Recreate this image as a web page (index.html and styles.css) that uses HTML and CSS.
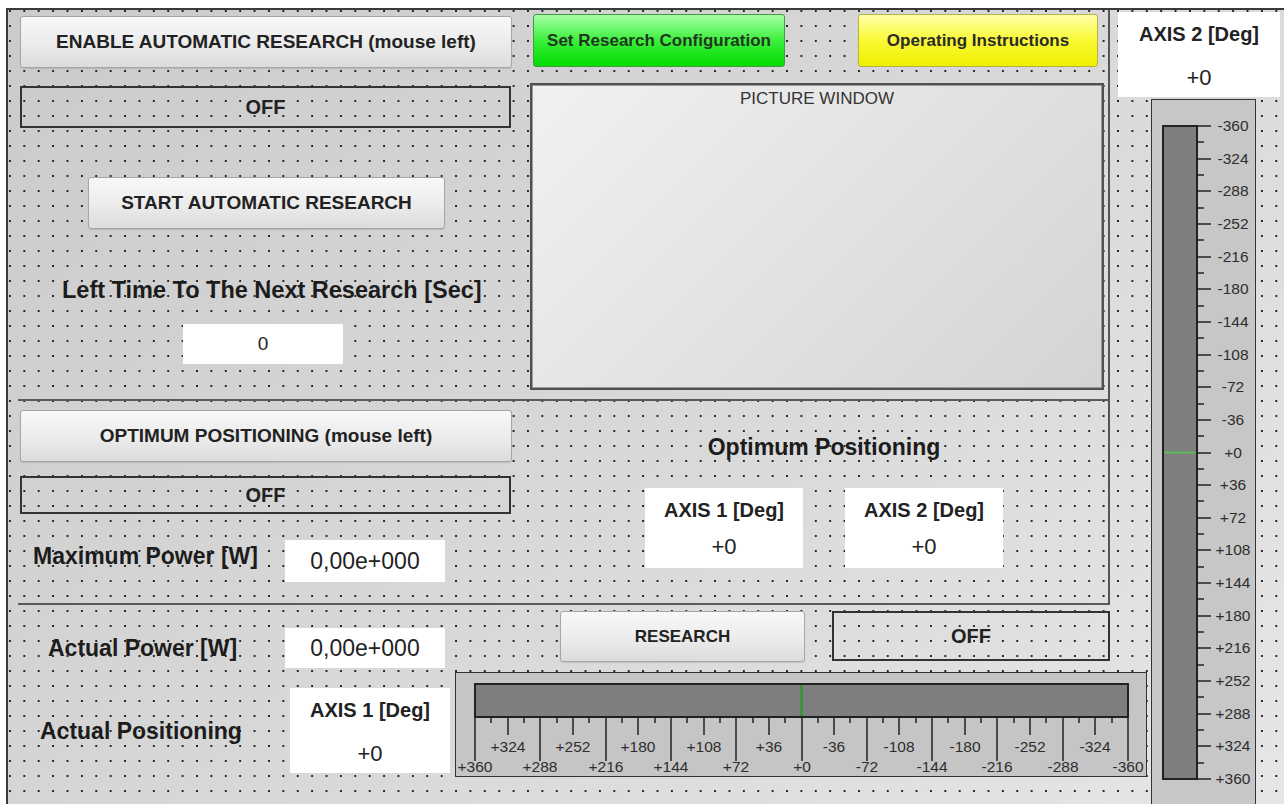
FILE: index.html
```html
<!DOCTYPE html>
<html lang="en">
<head>
    <meta charset="UTF-8">
    <meta name="viewport" content="width=device-width, initial-scale=1.0">
    <title>Automatic Research</title>
    <link rel="stylesheet" href="styles.css">
</head>
<body>
    <div class="panel">
        <div class="main">
            <section class="top">
                <div class="top-left">
                    <button class="btn btn-wide">ENABLE AUTOMATIC RESEARCH (mouse left)</button>
                    <div class="led-off led-auto">OFF</div>
                    <button class="btn btn-start">START AUTOMATIC RESEARCH</button>
                    <div class="label label-time">Left Time To The Next Research [Sec]</div>
                    <div class="numbox numbox-time">0</div>
                </div>
                <div class="top-right">
                    <div class="menu-row">
                        <button class="btn-color btn-green">Set Research Configuration</button>
                        <button class="btn-color btn-yellow">Operating Instructions</button>
                    </div>
                    <div class="picture">PICTURE WINDOW</div>
                </div>
            </section>
            <div class="divider"></div>
            <section class="mid">
                <div class="mid-left">
                    <button class="btn btn-wide btn-opt">OPTIMUM POSITIONING (mouse left)</button>
                    <div class="led-off led-opt">OFF</div>
                    <div class="power-row">
                        <span class="label label-max">Maximum Power [W]</span>
                        <div class="numbox numbox-power">0,00e+000</div>
                    </div>
                </div>
                <div class="mid-right">
                    <div class="label label-opt">Optimum Positioning</div>
                    <div class="axis-pair">
                        <div class="axis-box">
                            <div class="axis-title">AXIS 1 [Deg]</div>
                            <div class="axis-value">+0</div>
                        </div>
                        <div class="axis-box">
                            <div class="axis-title">AXIS 2 [Deg]</div>
                            <div class="axis-value">+0</div>
                        </div>
                    </div>
                </div>
            </section>
            <div class="divider"></div>
        </div>

        <div class="axis-box axis-top">
            <div class="axis-title">AXIS 2 [Deg]</div>
            <div class="axis-value">+0</div>
        </div>

        <div class="vgauge">
            <svg class="scale" id="vscale" width="105" height="720"></svg>
        </div>

        <section class="bottom">
            <div class="bottom-left">
                <div class="actual-row">
                    <span class="label label-actual">Actual Power [W]</span>
                    <div class="numbox numbox-power numbox-actual">0,00e+000</div>
                </div>
                <div class="actual-row pos-row">
                    <span class="label label-pos">Actual Positioning</span>
                    <div class="axis-box axis-actual">
                        <div class="axis-title">AXIS 1 [Deg]</div>
                        <div class="axis-value">+0</div>
                    </div>
                </div>
            </div>
            <div class="bottom-right">
                <div class="research-row">
                    <button class="btn btn-research">RESEARCH</button>
                    <div class="led-off led-research">OFF</div>
                </div>
                <div class="hgauge">
                    <svg class="scale" id="hscale" width="692" height="105"></svg>
                </div>
            </div>
        </section>
    </div>

    <script>
        // Skale dla osi 1 (pozioma) i osi 2 (pionowa)
        const NS = "http://www.w3.org/2000/svg";

        function draw(svg, tag, attrs, text) {
            const el = document.createElementNS(NS, tag);
            for (const k in attrs) el.setAttribute(k, attrs[k]);
            if (text !== undefined) el.textContent = text;
            svg.appendChild(el);
            return el;
        }

        function fmt(v) {
            return v >= 0 ? "+" + v : String(v);
        }

        const step = 653 / 40;

        // oś 1
        const h = document.getElementById("hscale");
        draw(h, "rect", { x: 0.5, y: 0.5, width: 691, height: 104, fill: "#c5c5c5", stroke: "#333" });
        draw(h, "rect", { x: 20, y: 12, width: 653, height: 33, fill: "#7e7e7e", stroke: "#222", "stroke-width": 2 });
        for (let i = 0; i <= 40; i++) {
            const x = Math.round(20 + i * step);
            const len = i % 4 === 0 ? 44 : (i % 4 === 2 ? 18 : 6);
            draw(h, "line", { x1: x, y1: 45, x2: x, y2: 45 + len, stroke: "#222", "stroke-width": 1.5 });
            if (i % 2 === 0) {
                draw(h, "text", { x: x, y: i % 4 === 0 ? 100 : 80, "text-anchor": "middle" }, fmt(360 - 18 * i));
            }
        }
        draw(h, "line", { x1: 346.5, y1: 13, x2: 346.5, y2: 44, stroke: "#1f9d1f", "stroke-width": 2 });

        // oś 2
        const v = document.getElementById("vscale");
        draw(v, "rect", { x: 0.5, y: 0.5, width: 104, height: 760, fill: "#c7c7c7", stroke: "#333" });
        draw(v, "rect", { x: 12, y: 27, width: 34, height: 653, fill: "#7e7e7e", stroke: "#222", "stroke-width": 2 });
        for (let j = 0; j <= 40; j++) {
            const y = Math.round(27 + j * step);
            draw(v, "line", { x1: 46, y1: y, x2: j % 2 === 0 ? 60 : 53, y2: y, stroke: "#222", "stroke-width": 1.5 });
            if (j % 2 === 0) {
                draw(v, "text", { x: 82, y: y + 5, "text-anchor": "middle" }, fmt(-360 + 18 * j));
            }
        }
        draw(v, "line", { x1: 13, y1: 353.5, x2: 45, y2: 353.5, stroke: "#5cb85c", "stroke-width": 2 });
    </script>
</body>
</html>
```

FILE: styles.css
```css
* {
    box-sizing: border-box;
}
body {
    margin: 0;
    padding: 8px 0 0 6px;
    height: 804px;
    overflow: hidden;
    background: #fff;
    font-family: "Liberation Sans", Arial, sans-serif;
    color: #222;
}
button {
    font-family: "Liberation Sans", Arial, sans-serif;
    padding: 0;
    cursor: pointer;
}
.panel {
    display: grid;
    grid-template-columns: 1102px 41px 1fr;
    grid-template-rows: 89px 506px 1fr;
    height: 796px;
    overflow: hidden;
    border-left: 2px solid #3a3a3a;
    border-top: 2px solid #3a3a3a;
    background-color: #d6d6d6;
    background-image:
        radial-gradient(circle at 2px 1px, #262626 0.8px, transparent 1.4px),
        linear-gradient(135deg, #cbcbcb 0%, #d8d8d8 50%, #e6e6e6 100%);
    background-size: 14.4px 15px, 100% 100%;
}

/* lewa kolumna z górną i środkową częścią */
.main {
    grid-column: 1;
    grid-row: 1 / 3;
    display: flex;
    flex-direction: column;
    border-right: 2px solid #555;
}
.top, .mid {
    display: grid;
    grid-template-columns: 492px 574px;
    column-gap: 18px;
    padding-left: 12px;
}
.top {
    height: 389px;
}
.mid {
    height: 202px;
}
.divider {
    flex: none;
    height: 2px;
    margin-left: 10px;
    background: #5a5a5a;
}

.top-left, .mid-left {
    display: flex;
    flex-direction: column;
    align-items: flex-start;
}
.btn {
    font-size: 19px;
    font-weight: bold;
    color: #222;
    background: linear-gradient(#f8f8f8, #ebebeb 55%, #dcdcdc);
    border: 1px solid #a6a6a6;
    border-radius: 3px;
    box-shadow: 0 1px 1px rgba(0, 0, 0, 0.12);
}
.btn-wide {
    width: 492px;
    height: 52px;
    margin-top: 6px;
}
.btn-start {
    width: 357px;
    height: 52px;
    margin-top: 49px;
    margin-left: 68px;
}
.led-off {
    display: flex;
    align-items: center;
    justify-content: center;
    border: 2px solid #333;
    font-size: 20px;
    font-weight: bold;
    color: #222;
}
.led-auto {
    width: 491px;
    height: 42px;
    margin-top: 18px;
}
.label {
    font-size: 23px;
    font-weight: bold;
    line-height: 30px;
    color: #1c1c1c;
    white-space: nowrap;
}
.label-time {
    margin-top: 46px;
    margin-left: 42px;
    font-size: 23.5px;
}
.numbox {
    display: flex;
    align-items: center;
    justify-content: center;
    background: #fff;
    color: #222;
}
.numbox-time {
    width: 160px;
    height: 40px;
    margin-top: 19px;
    margin-left: 163px;
    font-size: 19px;
}

.top-right {
    display: flex;
    flex-direction: column;
}
.menu-row {
    display: flex;
    justify-content: space-between;
    height: 53px;
    margin-top: 4px;
    padding: 0 6px 0 3px;
}
.btn-color {
    height: 53px;
    font-size: 17px;
    font-weight: bold;
    border-radius: 3px;
    color: #2b2b2b;
}
.btn-green {
    width: 252px;
    background: linear-gradient(#a6ffa6, #3cef3c 50%, #00dc00);
    border: 1px solid #3f9c3f;
    color: #21381f;
}
.btn-yellow {
    width: 240px;
    background: linear-gradient(#ffffaa, #f9f934 50%, #efef00);
    border: 1px solid #b4b43c;
}
.picture {
    height: 307px;
    margin-top: 16px;
    padding-top: 3px;
    border: 2px solid #505050;
    box-shadow: inset 0 0 0 1px #9a9a9a;
    background: linear-gradient(135deg, #f1f1f1, #d4d4d4);
    text-align: center;
    font-size: 17px;
    line-height: 22px;
    color: #333;
}

.btn-opt {
    margin-top: 9px;
}
.led-opt {
    width: 491px;
    height: 38px;
    margin-top: 14px;
}
.power-row {
    display: flex;
    align-items: center;
    margin-top: 26px;
}
.label-max {
    width: 252px;
    margin-left: 13px;
    margin-bottom: 10px;
}
.numbox-power {
    width: 160px;
    height: 42px;
    font-size: 23px;
}
.mid-right {
    display: flex;
    flex-direction: column;
    align-items: center;
    padding-left: 14px;
}
.label-opt {
    margin-top: 31px;
}
.axis-pair {
    display: flex;
    gap: 42px;
    margin-top: 26px;
}
.axis-box {
    display: flex;
    flex-direction: column;
    justify-content: space-between;
    align-items: center;
    padding: 10px 0 9px;
    background: #fff;
    color: #222;
}
.axis-pair .axis-box {
    width: 158px;
    height: 80px;
}
.axis-title {
    font-size: 20px;
    font-weight: bold;
    line-height: 24px;
}
.axis-value {
    font-size: 22px;
    line-height: 24px;
}

/* prawa kolumna */
.axis-top {
    grid-column: 2 / 4;
    grid-row: 1;
    width: 162px;
    height: 85px;
    margin: 2px 0 0 8px;
    padding-bottom: 7px;
}
.vgauge {
    grid-column: 3;
    grid-row: 2 / 4;
    width: 105px;
    height: 720px;
}
.scale {
    display: block;
}
.scale text {
    font-family: "Liberation Sans", Arial, sans-serif;
    font-size: 15.5px;
    fill: #2e2e2e;
}

/* dolna część */
.bottom {
    grid-column: 1 / 3;
    grid-row: 3;
    display: flex;
}
.bottom-left {
    width: 447px;
    display: flex;
    flex-direction: column;
    padding-top: 23px;
}
.actual-row {
    display: flex;
    align-items: center;
}
.label-actual {
    width: 237px;
    margin-left: 40px;
}
.numbox-actual {
    height: 40px;
}
.pos-row {
    margin-top: 20px;
}
.label-pos {
    width: 250px;
    margin-left: 32px;
}
.axis-actual {
    width: 160px;
    height: 85px;
    padding-bottom: 7px;
}
.bottom-right {
    display: flex;
    flex-direction: column;
    padding-top: 6px;
}
.research-row {
    display: flex;
    height: 51px;
}
.btn-research {
    width: 245px;
    height: 51px;
    margin-left: 105px;
    font-size: 17px;
}
.led-research {
    width: 278px;
    height: 50px;
    margin-left: 27px;
}
.hgauge {
    width: 692px;
    height: 105px;
    margin-top: 10px;
}
```
